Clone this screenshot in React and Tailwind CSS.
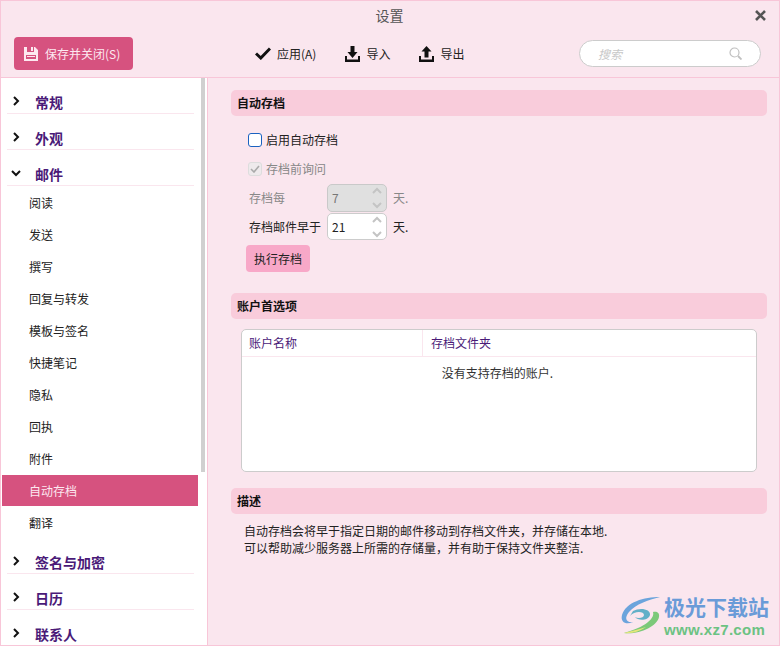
import React from "react";

const font = { fontFamily: '"Noto Sans CJK SC", "Liberation Sans", sans-serif' };

function Chevron({ open }) {
  return (
    <svg width="10" height="10" viewBox="0 0 10 10" fill="none" stroke="#111" strokeWidth="2" className="shrink-0">
      {open ? <path d="M1 3 L5 7 L9 3" /> : <path d="M3 1 L7 5 L3 9" />}
    </svg>
  );
}

function Group({ label, open }) {
  return (
    <div className="ml-[5px] mr-[4px] flex h-[36px] items-end border-b border-[#fae6ee]">
      <div className="mb-[7px] ml-[4px] w-[24px]">
        <Chevron open={open} />
      </div>
      <span className="text-[14px] leading-[22px] font-bold text-[#4a1a78]">{label}</span>
    </div>
  );
}

function SubItem({ label, active }) {
  return (
    <div
      className={
        active
          ? "mb-[1px] flex h-[31px] items-center bg-[#d6527f] pl-[27px] text-[12px] text-[#fde8f0]"
          : "flex h-[32px] items-center pl-[27px] text-[12px] text-[#222]"
      }
    >
      {label}
    </div>
  );
}

function SectionTitle({ children }) {
  return (
    <div className="flex h-[26px] items-center rounded-[5px] bg-[#f9ccdb] pl-[6px] text-[12px] font-bold text-[#111]">
      {children}
    </div>
  );
}

function Stepper({ value, disabled }) {
  return (
    <div
      className={
        disabled
          ? "flex h-[28px] w-[60px] items-center justify-between rounded-[5px] border border-[#c9c9c9] bg-[#e0e0e0] pl-[4px] pr-[3px] text-[12px] text-[#777]"
          : "flex h-[27px] w-[60px] items-center justify-between rounded-[5px] border border-[#cccccc] bg-white pl-[4px] pr-[3px] text-[12px] text-[#222]"
      }
    >
      <span>{value}</span>
      <svg width="12" height="24" viewBox="0 0 12 24" fill="none" stroke="#c4c4c4" strokeWidth="2">
        <path d="M2 7 L6 3 L10 7" />
        <path d="M2 17 L6 21 L10 17" />
      </svg>
    </div>
  );
}

function SaveIcon() {
  return (
    <svg width="16" height="16" viewBox="0 0 16 16" className="shrink-0">
      <path fill="#fde8f0" fillRule="evenodd" d="M1 1 H4 V6 H11 V1 H12 L15 4 V15 H1 Z M3 9 V13 H13 V9 Z" />
      <rect x="8" y="1" width="2" height="4" fill="#fde8f0" />
      <rect x="4" y="10" width="8" height="1" fill="#fde8f0" />
    </svg>
  );
}

function TrayIcon({ up }) {
  return (
    <svg width="15" height="16" viewBox="0 0 15 16" className="shrink-0">
      <path fill="#111" d="M0 10 H2 V13.6 H13 V10 H15 V16 H0 Z" />
      {up ? (
        <path fill="#111" d="M7.5 0 L12.5 5.5 H9.5 V11.5 H5.5 V5.5 H2.5 Z" />
      ) : (
        <path fill="#111" d="M5.5 0 H9.5 V6 H12.5 L7.5 12 L2.5 6 H5.5 Z" />
      )}
    </svg>
  );
}

function Watermark() {
  return (
    <div className="absolute left-[619px] top-[592px] flex items-start">
      <svg width="44" height="42" viewBox="0 0 44 42" fill="none" className="mt-[3px]">
        <path d="M40 1 C24 1 6 6 2 19 C0 27 7 29 13 26 C6 27 4 22 9 16 C16 8 28 4 40 1 Z" fill="#6ba4dc" />
        <path d="M10 20 C14 15 24 15 24 19 C24 22 18 23 15 21 C18 25 28 25 30 19 C31 13 20 11 13 15 Z" fill="#62b0c8" />
        <path d="M4 37 C18 39 37 31 39 21 C40 16 36 15 33 16 C35 22 26 31 4 37 Z" fill="#7cc97a" />
        <path d="M4 37 C12 38 20 35 26 31 C20 33 12 35 4 37 Z" fill="#e6e67a" />
      </svg>
      <div className="flex flex-col">
        <span className="text-[21px] leading-[26px] font-bold text-[#6a9bd8]">极光下载站</span>
        <span
          className="mt-[2px] text-[15px] leading-[18px] font-bold tracking-[0.3px] text-[#6cc283]"
          style={{ fontFamily: '"Liberation Sans", sans-serif' }}
        >
          www.xz7.com
        </span>
      </div>
    </div>
  );
}

export default function App() {
  return (
    <div
      className="relative flex h-[646px] w-[780px] flex-col overflow-hidden border border-[#f8c6d8] bg-[#fae6ee]"
      style={font}
    >
      {/* title + toolbar */}
      <div className="relative h-[77px] shrink-0 border-b border-[#f8c6d8]">
        <div className="pr-[1px] pt-[4px] text-center text-[14px] leading-[20px] text-[#555]">设置</div>
        <svg width="11" height="11" viewBox="0 0 11 11" stroke="#555" strokeWidth="2.6" className="absolute right-[13px] top-[9px]">
          <path d="M1 1 L10 10 M10 1 L1 10" />
        </svg>
        <div className="mt-[12px] flex items-center pl-[13px] pr-[18px]">
          <button className="flex h-[33px] w-[119px] items-center gap-[6px] rounded-[4px] bg-[#d6527f] pl-[9px] text-[12px] text-[#fde8f0]">
            <SaveIcon />
            保存并关闭(S)
          </button>
          <div className="ml-[122px] flex items-center text-[12px] text-[#222]">
            <svg width="16" height="13" viewBox="0 0 16 13" fill="none" stroke="#111" strokeWidth="3" className="mr-[6px]">
              <path d="M1 6.5 L5.8 11 L15 1.5" />
            </svg>
            应用(A)
            <span className="ml-[29px] mr-[6px]"><TrayIcon /></span>
            导入
            <span className="ml-[29px] mr-[6px]"><TrayIcon up /></span>
            导出
          </div>
          <div className="ml-auto flex h-[27px] w-[182px] items-center justify-between rounded-full border border-[#cccccc] bg-white pl-[18px] pr-[18px]">
            <span className="text-[12px] italic text-[#c8c8c8]">搜索</span>
            <svg width="13" height="13" viewBox="0 0 13 13" fill="none" stroke="#c0c0c0" strokeWidth="1.2">
              <circle cx="5.5" cy="5.5" r="4.5" />
              <path d="M9 9 L12.5 12.5" strokeWidth="1.8" />
            </svg>
          </div>
        </div>
      </div>

      <div className="flex min-h-0 flex-1">
        {/* nav */}
        <div className="flex w-[207px] shrink-0 overflow-hidden border-r border-[#f8c6d8] bg-white">
          <div className="ml-[1px] w-[196px] shrink-0">
            <Group label="常规" />
            <Group label="外观" />
            <Group label="邮件" open />
            <div className="pt-[1px]">
              <SubItem label="阅读" />
              <SubItem label="发送" />
              <SubItem label="撰写" />
              <SubItem label="回复与转发" />
              <SubItem label="模板与签名" />
              <SubItem label="快捷笔记" />
              <SubItem label="隐私" />
              <SubItem label="回执" />
              <SubItem label="附件" />
              <SubItem label="自动存档" active />
              <SubItem label="翻译" />
            </div>
            <div className="-mt-[1px]">
              <Group label="签名与加密" />
              <Group label="日历" />
              <Group label="联系人" />
            </div>
          </div>
          <div className="ml-[3px] h-[394px] w-[4px] shrink-0 bg-[#d0d0d0]" />
        </div>

        {/* content */}
        <div className="min-w-0 flex-1 pl-[23px] pr-[12px] pt-[12px] text-[12px]">
          <SectionTitle>自动存档</SectionTitle>

          <div className="ml-[17px] mt-[15px] flex items-center gap-[4px] text-[#222]">
            <span className="h-[14px] w-[14px] rounded-[3px] border border-[#1a62c0] bg-white" />
            启用自动存档
          </div>
          <div className="ml-[17px] mt-[11px] flex items-center gap-[4px] text-[#888]">
            <span className="flex h-[14px] w-[14px] items-center justify-center rounded-[3px] border border-[#dddddd] bg-[#eeeaec]">
              <svg width="10" height="8" viewBox="0 0 10 8" fill="none" stroke="#aaa" strokeWidth="1.6">
                <path d="M1 4 L4 7 L9 1" />
              </svg>
            </span>
            存档前询问
          </div>
          <div className="ml-[18px] mt-[6px] flex items-center text-[#888]">
            <span className="w-[78px]">存档每</span>
            <Stepper value="7" disabled />
            <span className="ml-[6px]">天.</span>
          </div>
          <div className="ml-[18px] mt-[1px] flex items-center text-[#222]">
            <span className="w-[78px]">存档邮件早于</span>
            <Stepper value="21" />
            <span className="ml-[6px]">天.</span>
          </div>
          <button className="ml-[15px] mt-[5px] h-[27px] w-[64px] rounded-[4px] bg-[#f8a8c8] text-[12px] text-[#222]">
            执行存档
          </button>

          <div className="mt-[21px]">
            <SectionTitle>账户首选项</SectionTitle>
          </div>
          <div className="mx-[10px] mt-[10px] h-[143px] rounded-[5px] border border-[#cccccc] bg-white">
            <div className="flex h-[27px] border-b border-[#fae6ee] text-[#4a1a78]">
              <div className="flex w-[181px] items-center border-r border-[#fae6ee] pl-[7px]">账户名称</div>
              <div className="flex items-center pl-[8px]">存档文件夹</div>
            </div>
            <div className="pr-[3px] pt-[6px] text-center leading-[20px] text-[#333]">没有支持存档的账户.</div>
          </div>

          <div className="mt-[16px]">
            <SectionTitle>描述</SectionTitle>
          </div>
          <div className="ml-[13px] mt-[8px] leading-[17px] text-[#222]">
            <p>自动存档会将早于指定日期的邮件移动到存档文件夹，并存储在本地.</p>
            <p>可以帮助减少服务器上所需的存储量，并有助于保持文件夹整洁.</p>
          </div>
        </div>
      </div>

      <Watermark />
    </div>
  );
}
